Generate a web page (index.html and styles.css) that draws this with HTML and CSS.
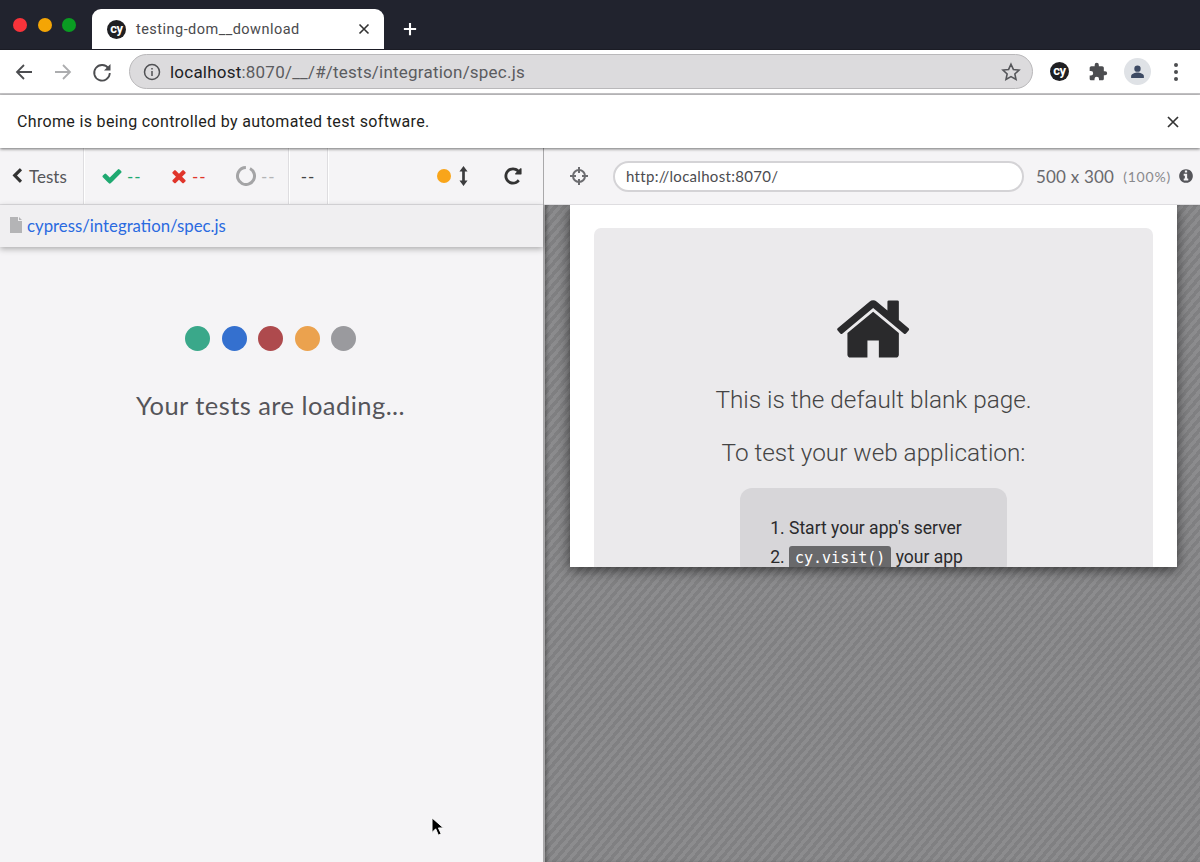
FILE: index.html
```html
<!DOCTYPE html>
<html lang="en">
<head>
    <meta charset="UTF-8">
    <meta name="viewport" content="width=device-width, initial-scale=1.0">
    <title>testing-dom__download</title>
    <link rel="stylesheet" href="styles.css">
</head>
<body>

<div class="tab-strip">
    <div class="traffic-lights">
        <span class="light light-red"></span>
        <span class="light light-amber"></span>
        <span class="light light-green"></span>
    </div>
    <div class="tab">
        <span class="cy-logo">cy</span>
        <span class="tab-title">testing-dom__download</span>
        <svg class="tab-close" viewBox="0 0 12 12"><path d="M1.500 1.500l9 9M10.500 1.500l-9 9"/></svg>
    </div>
    <svg class="new-tab" viewBox="0 0 16 16"><path d="M8 1v14M1 8h14"/></svg>
</div>

<div class="nav-bar">
    <svg class="nav-icon" viewBox="0 0 24 24"><path d="M20 12H5M12 5l-7 7 7 7"/></svg>
    <svg class="nav-icon nav-disabled" viewBox="0 0 24 24"><path d="M4 12h15M12 5l7 7-7 7"/></svg>
    <svg class="nav-icon" viewBox="0 0 24 24"><path d="M18.500 8.500A7.800 7.800 0 1 0 19.800 13"/><path class="filled" d="M20.500 4v6.500H14z"/></svg>
    <div class="omnibox">
        <svg class="omni-info" viewBox="0 0 20 20"><circle cx="10" cy="10" r="7.500"/><path d="M10 9v5M10 6v1.500"/></svg>
        <span class="omni-url"><span class="omni-host">localhost</span>:8070/__/#/tests/integration/spec.js</span>
        <svg class="omni-star" viewBox="0 0 24 24"><path d="M12 3.500l2.600 5.700 6.200.7-4.600 4.200 1.300 6.100-5.500-3.100-5.500 3.100 1.300-6.100-4.600-4.200 6.200-.7z"/></svg>
    </div>
    <div class="nav-actions">
        <span class="cy-logo">cy</span>
        <svg class="puzzle" viewBox="0 0 24 24"><path d="M20.500 11H19V7c0-1.100-.9-2-2-2h-4V3.500a2.500 2.500 0 0 0-5 0V5H4c-1.100 0-2 .9-2 2v3.800h1.500a2.700 2.700 0 0 1 0 5.400H2V20c0 1.100.9 2 2 2h3.800v-1.500a2.700 2.700 0 0 1 5.400 0V22H17c1.100 0 2-.9 2-2v-4h1.500a2.500 2.500 0 0 0 0-5z"/></svg>
        <span class="avatar">
            <svg viewBox="0 0 24 24"><circle cx="12" cy="8" r="4.500"/><path d="M3 21v-2.500c0-3.300 6-5 9-5s9 1.700 9 5V21z"/></svg>
        </span>
        <span class="kebab"><i></i><i></i><i></i></span>
    </div>
</div>

<div class="info-bar">
    <span>Chrome is being controlled by automated test software.</span>
    <svg class="info-close" viewBox="0 0 12 12"><path d="M1 1l10 10M11 1L1 11"/></svg>
</div>

<div class="app">
    <section class="reporter">
        <header class="toolbar reporter-bar">
            <div class="bar-cell tests-link">
                <svg class="fa fa-dark" viewBox="0 0 1792 1792"><path d="M1427 301l-531 531 531 531q19 19 19 45t-19 45l-166 166q-19 19-45 19t-45-19l-742-742q-19-19-19-45t19-45l742-742q19-19 45-19t45 19l166 166q19 19 19 45t-19 45z"/></svg>
                <span>Tests</span>
            </div>
            <div class="bar-cell stats">
                <span class="stat stat-pass">
                    <svg class="fa" viewBox="0 0 1792 1792"><path d="M1671 566q0 40-28 68l-724 724-136 136q-28 28-68 28t-68-28l-136-136-362-362q-28-28-28-68t28-68l136-136q28-28 68-28t68 28l294 295 656-657q28-28 68-28t68 28l136 136q28 28 28 68z"/></svg>--
                </span>
                <span class="stat stat-fail">
                    <svg class="fa" viewBox="0 0 1792 1792"><path d="M1490 1322q0 40-28 68l-136 136q-28 28-68 28t-68-28l-294-294-294 294q-28 28-68 28t-68-28l-136-136q-28-28-28-68t28-68l294-294-294-294q-28-28-28-68t28-68l136-136q28-28 68-28t68 28l294 294 294-294q28-28 68-28t68 28l136 136q28 28 28 68t-28 68l-294 294 294 294q28 28 28 68z"/></svg>--
                </span>
                <span class="stat stat-pending">
                    <svg class="ring" viewBox="0 0 20 20"><circle cx="10" cy="10" r="8.500" pathLength="100" stroke-dasharray="92 8" transform="rotate(-62 10 10)"/></svg>--
                </span>
            </div>
            <div class="bar-cell duration">--</div>
            <div class="bar-cell controls">
                <span class="orange-dot"></span>
                <svg class="arrows-v" viewBox="0 0 10 22"><path d="M5 0l4.500 6H6.500v10h3L5 22 .5 16h3V6h-3z"/></svg>
                <svg class="fa fa-dark restart" viewBox="0 0 1792 1792"><path d="M1664 256v448q0 26-19 45t-45 19h-448q-42 0-59-40-17-39 14-69l138-138q-148-137-349-137-104 0-198.500 40.500t-163.500 109.500-109.500 163.500-40.500 198.500 40.500 198.500 109.500 163.500 163.500 109.500 198.500 40.500q119 0 225-52t179-147q7-10 23-12 15 0 25 9l137 138q9 8 9.500 20.500t-7.500 22.500q-109 132-264 204.500t-327 72.500q-156 0-298-61t-245-164-164-245-61-298 61-298 164-245 245-164 298-61q147 0 284.500 55.500t244.500 156.500l130-129q29-31 70-14 39 17 39 59z"/></svg>
            </div>
        </header>
        <div class="spec-row">
            <svg class="file-icon" viewBox="0 0 12 16"><path d="M0 0h8v4h4v12H0zM9 0l3 3H9z"/></svg>
            <a class="spec-link">cypress/integration/spec.js</a>
        </div>
        <div class="loading">
            <div class="dots">
                <span class="dot dot-green"></span>
                <span class="dot dot-blue"></span>
                <span class="dot dot-red"></span>
                <span class="dot dot-orange"></span>
                <span class="dot dot-gray"></span>
            </div>
            <p class="loading-text">Your tests are loading...</p>
        </div>
    </section>

    <section class="runner">
        <header class="toolbar runner-bar">
            <svg class="crosshair" viewBox="0 0 20 20"><circle cx="10" cy="10" r="6"/><path d="M10 1v6M10 13v6M1 10h6M13 10h6"/></svg>
            <div class="aut-url">http://localhost:8070/</div>
            <span class="viewport-size">500 x 300</span>
            <span class="viewport-scale">(100%)</span>
            <svg class="fa viewport-info" viewBox="0 0 1792 1792"><path d="M1152 1376v-160q0-14-9-23t-23-9h-96v-512q0-14-9-23t-23-9h-320q-14 0-23 9t-9 23v160q0 14 9 23t23 9h96v320h-96q-14 0-23 9t-9 23v160q0 14 9 23t23 9h448q14 0 23-9t9-23zm-128-896v-160q0-14-9-23t-23-9h-192q-14 0-23 9t-9 23v160q0 14 9 23t23 9h192q14 0 23-9t9-23zm640 416q0 209-103 385.500t-279.500 279.500-385.500 103-385.500-103-279.500-279.500-103-385.500 103-385.500 279.500-279.500 385.500-103 385.500 103 279.500 279.500 103 385.500z"/></svg>
        </header>
        <div class="stage">
            <div class="aut-frame">
                <div class="blank-card">
                    <svg class="home" viewBox="0 0 1792 1792"><path d="M1408 992v480q0 26-19 45t-45 19h-384v-384h-256v384h-384q-26 0-45-19t-19-45v-480q0-1 .5-3t.5-3l575-474 575 474q1 2 1 6zm223-69l-62 74q-8 9-21 11h-3q-13 0-21-7l-692-577-692 577q-12 8-24 7-13-2-21-11l-62-74q-8-10-7-23.500t11-21.500l719-599q32-26 76-26t76 26l244 204v-195q0-14 9-23t23-9h192q14 0 23 9t9 23v408l219 182q10 8 11 21.500t-7 23.500z"/></svg>
                    <h1 class="blank-title">This is the default blank page.</h1>
                    <h2 class="blank-title">To test your web application:</h2>
                    <ol class="steps">
                        <li>Start your app's server</li>
                        <li><code>cy.visit()</code> your app</li>
                    </ol>
                </div>
            </div>
        </div>
    </section>
</div>

<svg class="cursor" viewBox="0 0 14 22"><path d="M1 1v16l4-4 3 7 3-1.500-3-6.500h5.500z"/></svg>

</body>
</html>
```

FILE: styles.css
```css
* {
    box-sizing: border-box;
}
html, body {
    height: 100%;
}
body {
    margin: 0;
    overflow: hidden;
    background: #fff;
    font-family: Roboto, "Liberation Sans", sans-serif;
    color: #222;
}

/* browser chrome */
.tab-strip {
    height: 50px;
    background: #21232e;
    display: flex;
    align-items: flex-end;
    border-bottom: 1px solid #1b1c25;
}
.traffic-lights {
    display: flex;
    gap: 10.500px;
    width: 92px;
    padding-left: 13px;
    align-self: flex-start;
    margin-top: 18px;
}
.light {
    width: 14px;
    height: 14px;
    border-radius: 50%;
}
.light-red { background: #f9333a; }
.light-amber { background: #f4a505; }
.light-green { background: #0a9c22; }
.tab {
    width: 292px;
    height: 40px;
    background: #fff;
    border-radius: 9px 9px 0 0;
    display: flex;
    align-items: center;
    padding: 0 14px 0 15px;
}
.tab-title {
    flex: 1;
    margin-left: 10px;
    font-size: 14.500px;
    letter-spacing: .47px;
    color: #4a4a4d;
}
.tab-close {
    width: 12px;
    height: 12px;
    fill: none;
    stroke: #333;
    stroke-width: 1.600;
}
.new-tab {
    width: 14px;
    height: 14px;
    margin: 0 0 13px 19px;
    fill: none;
    stroke: #fff;
    stroke-width: 2.400;
}
.cy-logo {
    width: 19px;
    height: 19px;
    border-radius: 50%;
    background: #1f1f22;
    color: #fff;
    font-size: 13px;
    font-weight: 700;
    line-height: 17px;
    text-align: center;
    letter-spacing: -.3px;
    flex: none;
}

.nav-bar {
    height: 45px;
    background: #fff;
    border-bottom: 2px solid #c6c5c7;
    display: flex;
    align-items: center;
    padding: 0 0 0 12px;
}
.nav-icon {
    width: 24px;
    height: 24px;
    margin-right: 15px;
    fill: none;
    stroke: #4c4d50;
    stroke-width: 1.800;
}
.nav-icon .filled {
    fill: #4c4d50;
    stroke: none;
}
.nav-disabled {
    stroke: #acadaf;
}
.omnibox {
    width: 904px;
    height: 35px;
    border: 1px solid #b9b8ba;
    border-radius: 18px;
    background: #dcdbdd;
    display: flex;
    align-items: center;
    padding: 0 10px 0 12px;
}
.omni-info {
    width: 20px;
    height: 20px;
    fill: none;
    stroke: #4f5053;
    stroke-width: 1.500;
}
.omni-url {
    flex: 1;
    margin-left: 8px;
    font-size: 17px;
    letter-spacing: .22px;
    color: #5b5c5f;
}
.omni-host {
    color: #202124;
}
.omni-star {
    width: 22px;
    height: 22px;
    fill: none;
    stroke: #55565a;
    stroke-width: 1.700;
}
.nav-actions {
    display: flex;
    align-items: center;
    margin-left: 17px;
}
.puzzle {
    width: 20px;
    height: 20px;
    margin-left: 19px;
    fill: #4c4d50;
}
.avatar {
    width: 27px;
    height: 27px;
    margin-left: 16px;
    border-radius: 50%;
    background: #dfe2e6;
    display: flex;
    align-items: center;
    justify-content: center;
}
.avatar svg {
    width: 17px;
    height: 17px;
    fill: #3d4a63;
}
.kebab {
    margin-left: 23px;
    display: flex;
    flex-direction: column;
    gap: 3px;
}
.kebab i {
    width: 4px;
    height: 4px;
    border-radius: 50%;
    background: #4c4d50;
}

.info-bar {
    height: 53px;
    background: #fff;
    display: flex;
    align-items: center;
    justify-content: space-between;
    padding: 0 21px 0 17px;
    font-size: 16px;
    letter-spacing: .34px;
    color: #1e1e20;
    position: relative;
    z-index: 3;
    box-shadow: 0 1px 3px rgba(0, 0, 0, .55);
}
.info-close {
    width: 12px;
    height: 12px;
    fill: none;
    stroke: #333;
    stroke-width: 1.700;
}

/* cypress app */
.app {
    height: 714px;
    display: flex;
    font-family: Lato, "Open Sans", sans-serif;
}
.toolbar {
    height: 57px;
    background: #f5f4f6;
    border-bottom: 1px solid #dedde0;
    display: flex;
    align-items: center;
}
.fa {
    width: 20px;
    height: 20px;
    fill: currentColor;
    flex: none;
}
.fa-dark {
    color: #333;
}

.reporter {
    width: 545px;
    background: #f5f4f6;
    border-right: 2px solid #a9a8aa;
    display: flex;
    flex-direction: column;
}
.reporter-bar {
    align-items: stretch;
}
.bar-cell {
    display: flex;
    align-items: center;
    border-right: 1px solid #dedde0;
    box-shadow: 1px 0 0 #fff;
}
.tests-link {
    width: 84px;
    padding-left: 9px;
    gap: 4px;
    font-size: 17px;
    color: #55565a;
}
.tests-link .fa {
    width: 16px;
    height: 16px;
}
.stats {
    width: 205px;
    padding-left: 17px;
    font-size: 17px;
    letter-spacing: 1px;
}
.stat {
    display: flex;
    align-items: center;
}
.stat-pass {
    width: 68px;
    color: #1fa971;
    gap: 4px;
}
.stat-fail {
    width: 67px;
    color: #e0352b;
    gap: 3px;
}
.stat-pass .fa {
    width: 22px;
    height: 22px;
}
.stat-fail .fa {
    width: 20px;
    height: 20px;
}
.stat-pending {
    color: #b4b4b6;
    gap: 5px;
}
.ring {
    width: 20px;
    height: 20px;
    fill: none;
    stroke: #a4a4a6;
    stroke-width: 3;
}
.duration {
    width: 39px;
    justify-content: center;
    font-size: 17px;
    letter-spacing: 1px;
    color: #444;
}
.controls {
    flex: 1;
    border-right: 0;
    box-shadow: none;
    padding-left: 109px;
}
.orange-dot {
    width: 14px;
    height: 14px;
    border-radius: 50%;
    background: #f9a51a;
}
.arrows-v {
    width: 9px;
    height: 20px;
    margin-left: 8px;
    fill: #3c3c3e;
}
.restart {
    margin-left: 35px;
}

.spec-row {
    height: 42px;
    background: #f0eff1;
    box-shadow: 0 2px 6px rgba(0, 0, 0, .3);
    display: flex;
    align-items: center;
    padding: 0 0 2px 10px;
    position: relative;
}
.file-icon {
    width: 12px;
    height: 16px;
    fill: #b4b4b6;
}
.spec-link {
    margin-left: 5px;
    font-size: 16.800px;
    color: #2a6ae0;
}
.loading {
    flex: 1;
    padding: 79px 2px 0 0;
    text-align: center;
}
.dots {
    display: flex;
    justify-content: center;
    gap: 11.500px;
}
.dot {
    width: 25px;
    height: 25px;
    border-radius: 50%;
}
.dot-green { background: #3aa88a; }
.dot-blue { background: #3470cf; }
.dot-red { background: #ae4a4d; }
.dot-orange { background: #eba24e; }
.dot-gray { background: #9a9a9e; }
.loading-text {
    margin: 39px 0 0;
    font-size: 25.500px;
    letter-spacing: .45px;
    color: #55555a;
}

.runner {
    flex: 1;
    display: flex;
    flex-direction: column;
}
.runner-bar {
    padding-left: 25px;
    margin-left: -1px;
    position: relative;
}
.crosshair {
    width: 20px;
    height: 20px;
    fill: none;
    stroke: #6c6c70;
    stroke-width: 2;
}
.aut-url {
    width: 411px;
    height: 31px;
    margin-left: 24px;
    padding: 0 11px;
    line-height: 27px;
    border: 2px solid #d4d3d6;
    border-radius: 16px;
    background: #fff;
    font-size: 15px;
    letter-spacing: .3px;
    color: #4c4c50;
}
.viewport-size {
    margin-left: 12px;
    font-size: 17px;
    letter-spacing: .2px;
    color: #69696d;
}
.viewport-scale {
    margin-left: 9px;
    font-size: 14px;
    letter-spacing: .8px;
    color: #89898d;
}
.viewport-info {
    width: 16px;
    height: 16px;
    margin-left: 7px;
    color: #55555a;
}
.stage {
    flex: 1;
    padding-left: 25px;
    background: repeating-linear-gradient(-50deg, #8c8c8e 0 3.500px, #808082 3.500px 7px);
    box-shadow: inset 3px 0 4px -2px rgba(0, 0, 0, .4);
}
.aut-frame {
    width: 607px;
    height: 362px;
    padding: 23px 24px 0;
    background: #fff;
    overflow: hidden;
    box-shadow: 0 3px 12px rgba(0, 0, 0, .6);
}
.blank-card {
    height: 420px;
    padding-top: 68px;
    border-radius: 7px;
    background: #ebeaec;
    display: flex;
    flex-direction: column;
    align-items: center;
    font-family: Roboto, "Liberation Sans", sans-serif;
    color: #333;
}
.home {
    width: 80px;
    height: 80px;
    margin: -7px 0 0 4px;
    fill: #2a2a2c;
}
.blank-title {
    margin: 0;
    font-size: 24.300px;
    font-weight: 300;
    line-height: 30px;
    color: #444;
}
h1.blank-title {
    margin-top: 16px;
}
h2.blank-title {
    margin-top: 23px;
}
.steps {
    width: 267px;
    margin: 20px 0 0;
    padding: 30px 0 0 49px;
    border-radius: 12px;
    background: #d7d6d9;
    font-size: 17.500px;
    color: #2a2a2c;
}
.steps li {
    height: 29px;
}
.steps code {
    padding: 3px 6px;
    border-radius: 3px;
    background: #69696b;
    font-family: "DejaVu Sans Mono", monospace;
    font-size: 15px;
    color: #fff;
}
.cursor {
    position: absolute;
    left: 431px;
    top: 817px;
    width: 13px;
    height: 20px;
    fill: #000;
    stroke: #fff;
    stroke-width: 1;
}
```
